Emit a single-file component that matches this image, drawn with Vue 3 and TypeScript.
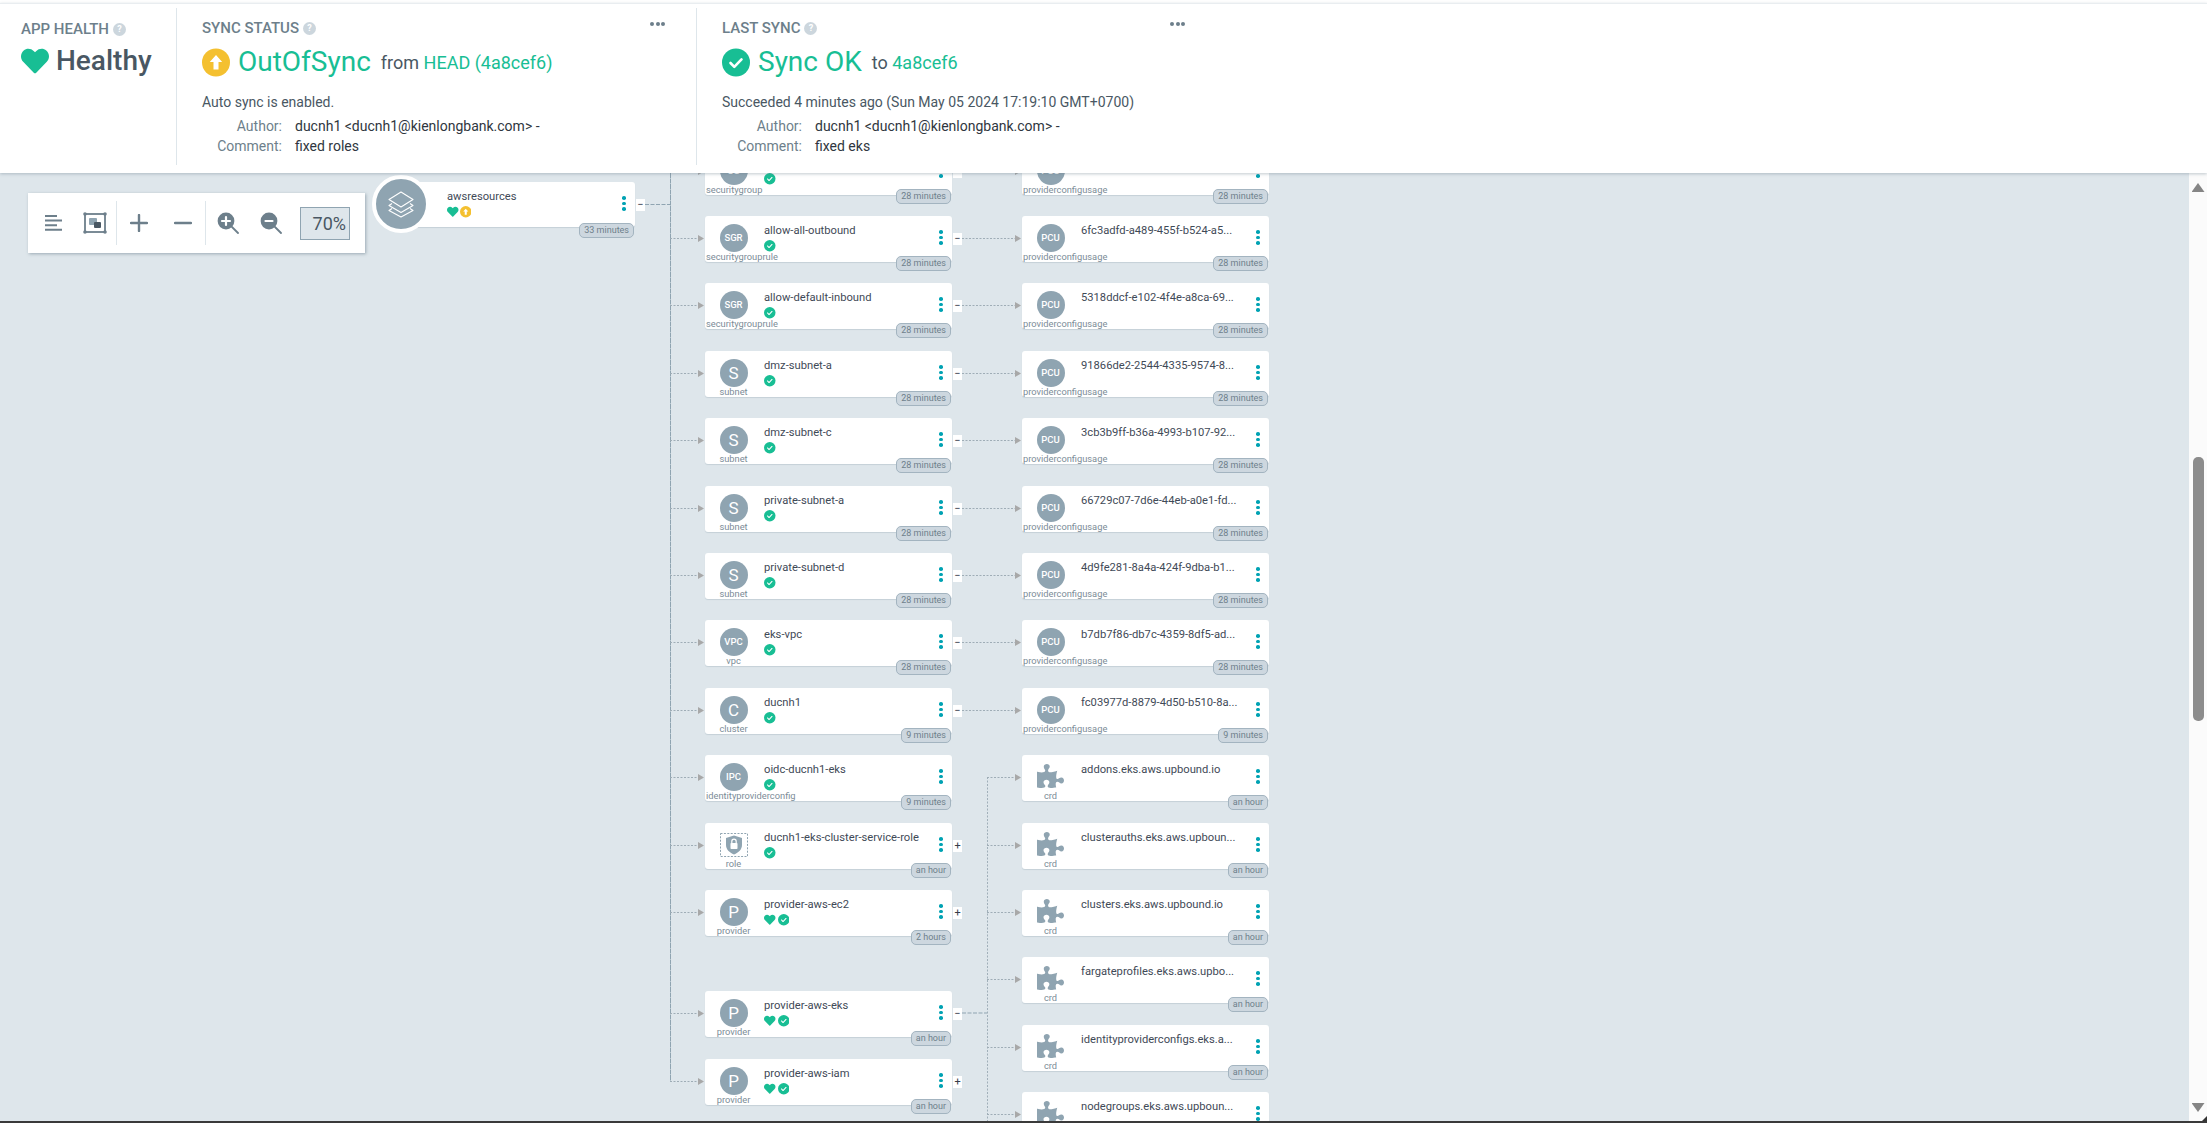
<script setup lang="ts">
type Kind = 'text' | 'role' | 'crd'
interface GNode {
  name: string
  kind: string
  glyph: string
  type: Kind
  time: string
  heart: boolean
  check: boolean
  btn: string
  row: number
}

const CANVAS_TOP = 173
const rowTop = (r: number) => Math.round(148.6 + 67.4 * r - CANVAS_TOP)

const mk = (name: string, kind: string, glyph: string, time: string, row: number, btn = '−', heart = false, type: Kind = 'text', check = true): GNode =>
  ({ name, kind, glyph, time, row, btn, heart, type, check })

const col1: GNode[] = [
  mk('eks-sg', 'securitygroup', 'SG', '28 minutes', 0),
  mk('allow-all-outbound', 'securitygrouprule', 'SGR', '28 minutes', 1),
  mk('allow-default-inbound', 'securitygrouprule', 'SGR', '28 minutes', 2),
  mk('dmz-subnet-a', 'subnet', 'S', '28 minutes', 3),
  mk('dmz-subnet-c', 'subnet', 'S', '28 minutes', 4),
  mk('private-subnet-a', 'subnet', 'S', '28 minutes', 5),
  mk('private-subnet-d', 'subnet', 'S', '28 minutes', 6),
  mk('eks-vpc', 'vpc', 'VPC', '28 minutes', 7),
  mk('ducnh1', 'cluster', 'C', '9 minutes', 8),
  mk('oidc-ducnh1-eks', 'identityproviderconfig', 'IPC', '9 minutes', 9, ''),
  mk('ducnh1-eks-cluster-service-role', 'role', '', 'an hour', 10, '+', false, 'role'),
  mk('provider-aws-ec2', 'provider', 'P', '2 hours', 11, '+', true),
  mk('provider-aws-eks', 'provider', 'P', 'an hour', 12.5, '−', true),
  mk('provider-aws-iam', 'provider', 'P', 'an hour', 13.5, '+', true),
]

const pcu = (name: string, row: number, time = '28 minutes') =>
  mk(name, 'providerconfigusage', 'PCU', time, row, '', false, 'text', false)
const crd = (name: string, row: number) =>
  mk(name, 'crd', '', 'an hour', row, '', false, 'crd', false)

const col2: GNode[] = [
  pcu('0a1f2c3d-77be-4c11-9e02-b1...', 0),
  pcu('6fc3adfd-a489-455f-b524-a5...', 1),
  pcu('5318ddcf-e102-4f4e-a8ca-69...', 2),
  pcu('91866de2-2544-4335-9574-8...', 3),
  pcu('3cb3b9ff-b36a-4993-b107-92...', 4),
  pcu('66729c07-7d6e-44eb-a0e1-fd...', 5),
  pcu('4d9fe281-8a4a-424f-9dba-b1...', 6),
  pcu('b7db7f86-db7c-4359-8df5-ad...', 7),
  pcu('fc03977d-8879-4d50-b510-8a...', 8, '9 minutes'),
  crd('addons.eks.aws.upbound.io', 9),
  crd('clusterauths.eks.aws.upboun...', 10),
  crd('clusters.eks.aws.upbound.io', 11),
  crd('fargateprofiles.eks.aws.upbo...', 12),
  crd('identityproviderconfigs.eks.a...', 13),
  crd('nodegroups.eks.aws.upboun...', 14),
]

const columns = [
  { left: 705, nodes: col1 },
  { left: 1022, nodes: col2 },
]

const lineY = (r: number) => rowTop(r) + 22

const arrows = [
  ...col1.map((n) => ({ key: 'a' + n.row, x1: 670, x2: 699, y: lineY(n.row), tip: 705 })),
  ...col1.filter((n) => n.btn === '−' && n.row < 9).map((n) => ({ key: 'b' + n.row, x1: 962, x2: 1016, y: lineY(n.row), tip: 1022 })),
  ...col2.filter((n) => n.type === 'crd').map((n) => ({ key: 'c' + n.row, x1: 987, x2: 1016, y: lineY(n.row), tip: 1022 })),
]

const trunkBottom = lineY(13.5)
const crdTop = lineY(9)
const eksY = lineY(12.5)
</script>

<template>
  <div class="frame">
    <header class="summary">
      <section class="panel health">
        <div class="label">APP HEALTH <span class="help">?</span></div>
        <div class="headline">
          <svg class="big-heart" viewBox="0 0 512 512"><path d="M462.3 62.6C407.5 15.9 326 24.3 275.7 76.2L256 96.5l-19.7-20.3C186.1 24.3 104.5 15.9 49.7 62.6c-62.8 53.6-66.1 149.8-9.9 207.9l193.5 199.8c12.5 12.9 32.8 12.9 45.3 0l193.5-199.8c56.3-58.1 53-154.3-9.8-207.9z" /></svg>
          <span class="healthy">Healthy</span>
        </div>
      </section>

      <section class="panel sync">
        <div class="label">SYNC STATUS <span class="help">?</span></div>
        <div class="headline">
          <svg class="big-status" viewBox="0 0 28 28">
            <circle cx="14" cy="14" r="14" fill="#f4c030" />
            <path d="M14 6.5l6.2 7h-3.7v7.5h-5v-7.5H7.8z" fill="#fff" />
          </svg>
          <span class="state">OutOfSync</span>
          <span class="rev">from <em>HEAD (4a8cef6)</em></span>
        </div>
        <div class="note">Auto sync is enabled.</div>
        <dl class="meta">
          <dt>Author:</dt><dd>ducnh1 &lt;ducnh1@kienlongbank.com&gt; -</dd>
          <dt>Comment:</dt><dd>fixed roles</dd>
        </dl>
        <div class="more"><i></i><i></i><i></i></div>
      </section>

      <section class="panel last">
        <div class="label">LAST SYNC <span class="help">?</span></div>
        <div class="headline">
          <svg class="big-status" viewBox="0 0 28 28">
            <circle cx="14" cy="14" r="14" fill="#18be94" />
            <path d="M8.5 14.5l3.8 3.8 7.2-7.4" fill="none" stroke="#fff" stroke-width="2.6" stroke-linecap="round" stroke-linejoin="round" />
          </svg>
          <span class="state">Sync OK</span>
          <span class="rev">to <em>4a8cef6</em></span>
        </div>
        <div class="note">Succeeded 4 minutes ago (Sun May 05 2024 17:19:10 GMT+0700)</div>
        <dl class="meta">
          <dt>Author:</dt><dd>ducnh1 &lt;ducnh1@kienlongbank.com&gt; -</dd>
          <dt>Comment:</dt><dd>fixed eks</dd>
        </dl>
        <div class="more"><i></i><i></i><i></i></div>
      </section>
    </header>

    <main class="workspace">
      <div class="canvas">
        <svg class="edges" width="2189" height="950">
          <path d="M645 31.5H670" class="solid-dash" />
          <path :d="`M670.5 0V${trunkBottom}`" class="trunk" />
          <path :d="`M987.5 ${crdTop}V950`" class="trunk-thin" />
          <path :d="`M962 ${eksY}H987`" class="solid-dash" />
          <template v-for="a in arrows" :key="a.key">
            <path :d="`M${a.x1} ${a.y + 0.5}H${a.x2}`" class="dots" />
            <path :d="`M${a.x2 - 1} ${a.y - 3}L${a.tip - 1} ${a.y + 0.5}L${a.x2 - 1} ${a.y + 4}z`" class="tip" />
          </template>
        </svg>

        <div class="toolbar">
          <button class="tool">
            <svg width="20" height="20" viewBox="0 0 20 20"><path d="M2 3h12M2 7.6h17M2 12.2h12M2 16.8h17" stroke="#6d7f8b" stroke-width="2" fill="none" /></svg>
          </button>
          <button class="tool">
            <svg width="24" height="22" viewBox="0 0 24 22">
              <rect x="2" y="2" width="20" height="18" fill="none" stroke="#6d7f8b" stroke-width="1.8" />
              <circle cx="2" cy="2" r="1.8" fill="#6d7f8b" /><circle cx="22" cy="2" r="1.8" fill="#6d7f8b" />
              <circle cx="2" cy="20" r="1.8" fill="#6d7f8b" /><circle cx="22" cy="20" r="1.8" fill="#6d7f8b" />
              <rect x="6" y="6" width="8" height="7" rx="1" fill="#8fa4b1" />
              <rect x="11" y="10" width="7" height="6" rx="1" fill="#495763" />
            </svg>
          </button>
          <span class="divider"></span>
          <button class="tool wide">
            <svg width="18" height="18" viewBox="0 0 18 18"><path d="M9 1v16M1 9h16" stroke="#6d7f8b" stroke-width="2.4" fill="none" stroke-linecap="round" /></svg>
          </button>
          <button class="tool wide">
            <svg width="18" height="18" viewBox="0 0 18 18"><path d="M1 9h16" stroke="#6d7f8b" stroke-width="2.4" fill="none" stroke-linecap="round" /></svg>
          </button>
          <span class="divider"></span>
          <button class="tool mid">
            <svg width="22" height="22" viewBox="0 0 22 22">
              <circle cx="9" cy="9" r="8.4" fill="#6d7f8b" />
              <path d="M9 5v8M5 9h8" stroke="#fff" stroke-width="2.2" stroke-linecap="round" />
              <path d="M15 15l6 6" stroke="#6d7f8b" stroke-width="1.8" stroke-linecap="round" />
            </svg>
          </button>
          <button class="tool wide">
            <svg width="22" height="22" viewBox="0 0 22 22">
              <circle cx="9" cy="9" r="8.4" fill="#6d7f8b" />
              <path d="M5.5 9h7" stroke="#fff" stroke-width="2.2" stroke-linecap="round" />
              <path d="M15 15l6 6" stroke="#6d7f8b" stroke-width="1.8" stroke-linecap="round" />
            </svg>
          </button>
          <div class="zoom-value">70%</div>
        </div>

        <div class="root-node">
          <div class="root-circle">
            <svg width="26" height="27" viewBox="0 0 26 27" fill="none" stroke="#fff" stroke-width="1.1" stroke-linejoin="round">
              <path d="M13 1L25 8.5 13 16 1 8.5z" />
              <path d="M4 12.5L1 14.5 13 21.5 25 14.5 22 12.5" />
              <path d="M4 17.5L1 19.5 13 26 25 19.5 22 17.5" />
            </svg>
          </div>
          <div class="root-body">
            <div class="name">awsresources</div>
            <div class="statuses tight">
              <svg class="mini" viewBox="0 0 512 512"><path fill="#18be94" d="M462.3 62.6C407.5 15.9 326 24.3 275.7 76.2L256 96.5l-19.7-20.3C186.1 24.3 104.5 15.9 49.7 62.6c-62.8 53.6-66.1 149.8-9.9 207.9l193.5 199.8c12.5 12.9 32.8 12.9 45.3 0l193.5-199.8c56.3-58.1 53-154.3-9.8-207.9z" /></svg>
              <svg class="mini" viewBox="0 0 28 28">
                <circle cx="14" cy="14" r="14" fill="#f4c030" />
                <path d="M14 6.5l6.2 7h-3.7v7.5h-5v-7.5H7.8z" fill="#fff" />
              </svg>
            </div>
          </div>
          <div class="kebab"><i></i><i></i><i></i></div>
          <span class="toggle">−</span>
          <span class="badge">33 minutes</span>
        </div>

        <template v-for="col in columns" :key="col.left">
          <div
            v-for="n in col.nodes"
            :key="n.name"
            class="node"
            :style="{ left: col.left + 'px', top: rowTop(n.row) + 'px' }"
          >
            <div class="node-icon">
              <div v-if="n.type === 'text'" class="circle" :class="{ single: n.glyph.length === 1 }">{{ n.glyph }}</div>
              <svg v-else-if="n.type === 'crd'" class="puzzle" viewBox="0 0 576 512"><path d="M519.442 288.651c-41.519 0-59.5 31.593-82.058 31.593C377.409 320.244 432 144 432 144s-196.288 80-196.288-3.297c0-35.827 36.288-46.25 36.288-85.985C272 19.216 243.885 0 210.539 0c-34.654 0-66.366 18.891-66.366 56.346 0 41.364 31.711 59.277 31.711 81.75C175.885 207.719 0 166.758 0 166.758v333.237s178.635 41.047 178.635-28.662c0-22.473-40-40.107-40-81.471 0-37.456 29.25-56.346 63.577-56.346 33.673 0 61.788 19.216 61.788 54.717 0 39.735-36.288 50.158-36.288 85.985 0 60.803 129.675 25.73 181.23 25.73 0 0-34.725-120.101 25.827-120.101 35.962 0 46.423 36.152 86.308 36.152C556.712 416 576 387.99 576 354.443c0-34.199-18.962-65.792-56.558-65.792z" /></svg>
              <svg v-else class="role" viewBox="0 0 28 24">
                <rect x="0.5" y="0.5" width="27" height="23" fill="none" stroke="#8fa4b1" stroke-dasharray="2 1.4" />
                <path d="M14 2.5l8 2.6v7c0 4.4-3.4 7.6-8 9.4-4.6-1.8-8-5-8-9.4v-7z" fill="#8fa4b1" />
                <rect x="10.5" y="10" width="7" height="6" rx="0.8" fill="#fff" />
                <path d="M11.8 10V8.4a2.2 2.2 0 0 1 4.4 0V10" fill="none" stroke="#fff" stroke-width="1.2" />
              </svg>
              <div class="kind">{{ n.kind }}</div>
            </div>
            <div class="node-body">
              <div class="name">{{ n.name }}</div>
              <div class="statuses">
                <svg v-if="n.heart" class="mini" viewBox="0 0 512 512"><path fill="#18be94" d="M462.3 62.6C407.5 15.9 326 24.3 275.7 76.2L256 96.5l-19.7-20.3C186.1 24.3 104.5 15.9 49.7 62.6c-62.8 53.6-66.1 149.8-9.9 207.9l193.5 199.8c12.5 12.9 32.8 12.9 45.3 0l193.5-199.8c56.3-58.1 53-154.3-9.8-207.9z" /></svg>
                <svg v-if="n.check" class="mini" viewBox="0 0 28 28">
                  <circle cx="14" cy="14" r="14" fill="#18be94" />
                  <path d="M8.5 14.5l3.8 3.8 7.2-7.4" fill="none" stroke="#fff" stroke-width="2.6" stroke-linecap="round" stroke-linejoin="round" />
                </svg>
              </div>
            </div>
            <div class="kebab"><i></i><i></i><i></i></div>
            <span v-if="n.btn" class="toggle">{{ n.btn }}</span>
            <span class="badge">{{ n.time }}</span>
          </div>
        </template>
      </div>

      <aside class="scrollbar">
        <span class="arrow up"></span>
        <span class="thumb"></span>
        <span class="arrow down"></span>
        <span class="corner"></span>
      </aside>
    </main>
    <div class="baseline"></div>
  </div>
</template>

<style>
html, body { margin: 0; background: #fff; }
</style>

<style scoped>
.frame {
  width: 2207px;
  height: 1123px;
  display: flex;
  flex-direction: column;
  overflow: hidden;
  font-family: Roboto, "Liberation Sans", sans-serif;
  color: #495763;
}

/* header */
.summary {
  height: 170px;
  margin-top: 3px;
  border-top: 1px solid #e9edf0;
  box-sizing: border-box;
  padding-top: 4px;
  display: flex;
  align-items: flex-start;
  background: #fff;
  box-shadow: 0 1px 3px rgba(100, 120, 135, 0.4);
  position: relative;
  z-index: 3;
  flex: none;
}
.panel {
  height: 157px;
  box-sizing: border-box;
  position: relative;
  border-right: 1px solid #dee6eb;
}
.health { width: 177px; padding: 13px 0 0 21px; }
.sync { width: 520px; padding: 12px 0 0 25px; }
.last { border-right: 0; flex: 1; padding: 12px 0 0 25px; }
.label {
  font-size: 15px;
  line-height: 16px;
  font-weight: 500;
  color: #6d7f8b;
  display: flex;
  align-items: center;
  gap: 4px;
}
.help {
  width: 13px;
  height: 13px;
  border-radius: 50%;
  background: #ccd6dd;
  color: #fff;
  font-size: 9px;
  font-weight: 700;
  line-height: 13px;
  text-align: center;
}
.headline { display: flex; align-items: center; height: 30px; margin-top: 11px; }
.health .headline { margin-top: 9px; }
.big-heart { width: 28px; height: 28px; fill: #18be94; margin-right: 7px; }
.healthy { font-size: 28px; font-weight: 500; color: #495763; line-height: 30px; }
.big-status { width: 28px; height: 29px; margin-right: 8px; }
.state { font-size: 28px; color: #18be94; line-height: 30px; }
.rev { font-size: 18px; margin-left: 10px; color: #495763; }
.rev em { font-style: normal; color: #18be94; }
.note { font-size: 14px; line-height: 18px; margin-top: 16px; color: #495763; }
.meta {
  display: grid;
  grid-template-columns: 80px auto;
  justify-content: start;
  column-gap: 13px;
  row-gap: 2px;
  margin: 6px 0 0;
  font-size: 14px;
  line-height: 18px;
}
.meta dt { text-align: right; color: #6d7f8b; }
.meta dd { margin: 0; color: #2f3640; }
.more {
  position: absolute;
  top: 14px;
  left: 473px;
  display: flex;
  gap: 1.5px;
}
.more i { display: block; width: 4px; height: 4px; border-radius: 50%; background: #6d7f8b; }

/* canvas */
.workspace { flex: 1; min-height: 0; display: flex; }
.canvas {
  flex: 1;
  position: relative;
  background: #dee6eb;
  overflow: hidden;
}
.edges { position: absolute; left: 0; top: 0; }
.solid-dash { stroke: #8fa4b1; stroke-width: 1; fill: none; stroke-dasharray: 4 1.5; }
.trunk { stroke: #8fa4b1; stroke-width: 1; fill: none; stroke-dasharray: 5 0.5; }
.trunk-thin { stroke: #a0afb9; stroke-width: 1; fill: none; stroke-dasharray: 2 1.5; }
.dots { stroke: #9fadb6; stroke-width: 1; fill: none; stroke-dasharray: 2 1.5; }
.tip { fill: #a8a8a8; }

.toolbar {
  position: absolute;
  left: 28px;
  top: 20px;
  height: 60px;
  width: 337px;
  box-sizing: border-box;
  padding-left: 4px;
  display: flex;
  align-items: center;
  background: #fff;
  box-shadow: 1px 1px 3px rgba(100, 120, 135, 0.55);
}
.tool {
  width: 42px;
  height: 44px;
  padding: 0;
  border: 0;
  background: none;
  display: flex;
  align-items: center;
  justify-content: center;
  flex: none;
}
.tool.wide { width: 44px; }
.tool.mid { width: 43px; }
.divider { width: 1px; height: 44px; background: #dee6eb; flex: none; }
.zoom-value {
  width: 50px;
  height: 33px;
  box-sizing: border-box;
  margin-left: 7px;
  border: 1px solid #8fa4b1;
  background: #dee6eb;
  font-size: 18px;
  line-height: 31px;
  text-align: right;
  padding-right: 3px;
  color: #495763;
}

.root-node {
  position: absolute;
  left: 400px;
  top: 9px;
  width: 235px;
  height: 45px;
  background: #fff;
  border-radius: 3px;
  box-shadow: 0 1px 1px #c5d0d8;
}
.root-circle {
  position: absolute;
  left: -28px;
  top: -7px;
  width: 50px;
  height: 50px;
  border: 4px solid #fff;
  border-radius: 50%;
  background: #8fa4b1;
  display: flex;
  align-items: center;
  justify-content: center;
}
.root-body { position: absolute; left: 47px; top: 7px; }
.root-body .statuses { margin-top: 1px; }
.root-node .kebab { right: 9px; }
.root-node .badge { top: 41px; }
.root-node .toggle { top: 17px; }

.node {
  position: absolute;
  width: 247px;
  height: 46px;
  background: #fff;
  border-radius: 3px;
  box-shadow: 0 1px 1px #c5d0d8;
  display: flex;
}
.node-icon {
  width: 56px;
  flex: none;
  padding: 8px 0 0 1px;
  box-sizing: border-box;
  display: flex;
  flex-direction: column;
  align-items: center;
}
.circle {
  width: 28px;
  height: 28px;
  flex: none;
  border-radius: 50%;
  background: #8fa4b1;
  color: #fff;
  font-size: 9.5px;
  font-weight: 500;
  line-height: 28px;
  text-align: center;
}
.circle.single { font-size: 17px; font-weight: 400; }
.puzzle { width: 27px; height: 24px; fill: #8fa4b1; margin-top: 1px; margin-bottom: 3px; flex: none; }
.role { width: 28px; height: 24px; margin-top: 2px; margin-bottom: 2px; flex: none; }
.kind {
  align-self: flex-start;
  min-width: 100%;
  text-align: center;
  font-size: 9.3px;
  line-height: 10px;
  color: #7b8c97;
  white-space: nowrap;
}
.node-body { margin-left: 3px; padding-top: 7px; min-width: 0; }
.name {
  font-size: 11.2px;
  line-height: 16px;
  color: #3f4a57;
  white-space: nowrap;
}
.statuses { display: flex; gap: 2px; margin-top: 1px; height: 12px; align-items: center; }
.statuses.tight { gap: 1px; }
.mini { width: 11.5px; height: 11.5px; flex: none; }
.kebab {
  position: absolute;
  right: 9px;
  top: 14px;
  display: flex;
  flex-direction: column;
  gap: 2px;
}
.kebab i { display: block; width: 3.6px; height: 3.6px; border-radius: 50%; background: #00a2b3; }
.toggle {
  position: absolute;
  left: 100%;
  top: 17px;
  margin-left: 1px;
  width: 9px;
  height: 12px;
  background: #fff;
  color: #363c4a;
  font-size: 11px;
  line-height: 12px;
  text-align: center;
}
.badge {
  position: absolute;
  right: 1px;
  top: 40px;
  height: 15px;
  box-sizing: border-box;
  padding: 0 4px;
  border: 1px solid #a3b4c0;
  border-radius: 5px;
  background: #cdd7df;
  color: #6d7f8b;
  font-size: 9px;
  line-height: 13px;
  white-space: nowrap;
}

/* scrollbar */
.scrollbar {
  width: 18px;
  flex: none;
  position: relative;
  background: #fbfbfb;
  display: flex;
  flex-direction: column;
  align-items: center;
}
.arrow { width: 13px; height: 9px; background: #858585; flex: none; }
.arrow.up { margin-top: 10px; clip-path: polygon(50% 0, 100% 100%, 0 100%); }
.arrow.down { margin-top: auto; margin-bottom: 9px; clip-path: polygon(0 0, 100% 0, 50% 100%); }
.thumb { width: 11px; height: 264px; margin-top: 265px; border-radius: 5px; background: #8c8c8c; flex: none; }
.corner {
  position: absolute;
  right: 0;
  bottom: 0;
  width: 5px;
  height: 5px;
  background: #333;
  clip-path: polygon(100% 0, 100% 100%, 0 100%);
}
.baseline { height: 2px; background: #3a3a3a; flex: none; }
</style>
